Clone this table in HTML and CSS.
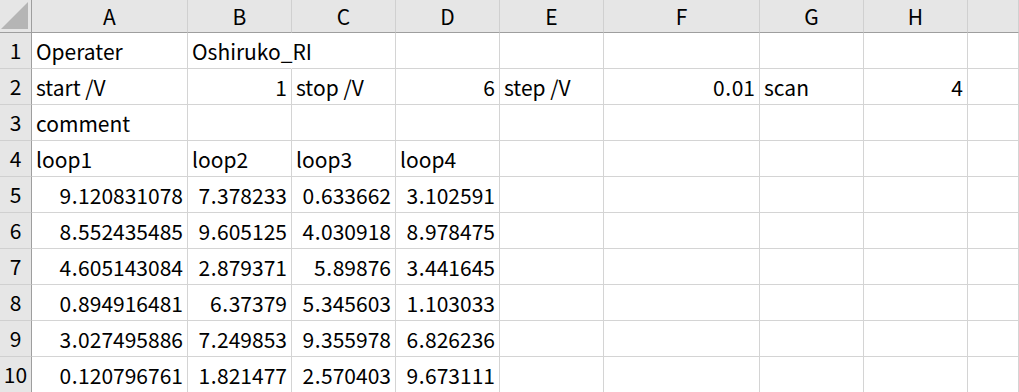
FILE: index.html
```html
<!DOCTYPE html>
<html>
<head>
<meta charset="utf-8">
<link rel="stylesheet" href="styles.css">
</head>
<body>
<div class="sheet">
  <div class="corner"><svg class="tri" width="27" height="27" viewBox="0 0 27 27"><polygon points="27,0 27,27 0,27" fill="#b5b5b5"/></svg></div>
  <div class="ch">A</div><div class="ch">B</div><div class="ch">C</div><div class="ch">D</div><div class="ch">E</div><div class="ch">F</div><div class="ch">G</div><div class="ch">H</div><div class="ch"></div>

  <div class="rh">1</div><div class="c">Operater</div><div class="c ov">Oshiruko_RI</div><div class="c"></div><div class="c"></div><div class="c"></div><div class="c"></div><div class="c"></div><div class="c"></div><div class="c"></div>

  <div class="rh">2</div><div class="c">start /V</div><div class="c n">1</div><div class="c">stop /V</div><div class="c n">6</div><div class="c">step /V</div><div class="c n">0<span class="dot">.</span>01</div><div class="c">scan</div><div class="c n">4</div><div class="c"></div>

  <div class="rh">3</div><div class="c">comment</div><div class="c"></div><div class="c"></div><div class="c"></div><div class="c"></div><div class="c"></div><div class="c"></div><div class="c"></div><div class="c"></div>

  <div class="rh">4</div><div class="c">loop1</div><div class="c">loop2</div><div class="c">loop3</div><div class="c">loop4</div><div class="c"></div><div class="c"></div><div class="c"></div><div class="c"></div><div class="c"></div>

  <div class="rh">5</div><div class="c n">9<span class="dot">.</span>120831078</div><div class="c n">7<span class="dot">.</span>378233</div><div class="c n">0<span class="dot">.</span>633662</div><div class="c n">3<span class="dot">.</span>102591</div><div class="c"></div><div class="c"></div><div class="c"></div><div class="c"></div><div class="c"></div>

  <div class="rh">6</div><div class="c n">8<span class="dot">.</span>552435485</div><div class="c n">9<span class="dot">.</span>605125</div><div class="c n">4<span class="dot">.</span>030918</div><div class="c n">8<span class="dot">.</span>978475</div><div class="c"></div><div class="c"></div><div class="c"></div><div class="c"></div><div class="c"></div>

  <div class="rh">7</div><div class="c n">4<span class="dot">.</span>605143084</div><div class="c n">2<span class="dot">.</span>879371</div><div class="c n">5<span class="dot">.</span>89876</div><div class="c n">3<span class="dot">.</span>441645</div><div class="c"></div><div class="c"></div><div class="c"></div><div class="c"></div><div class="c"></div>

  <div class="rh">8</div><div class="c n">0<span class="dot">.</span>894916481</div><div class="c n">6<span class="dot">.</span>37379</div><div class="c n">5<span class="dot">.</span>345603</div><div class="c n">1<span class="dot">.</span>103033</div><div class="c"></div><div class="c"></div><div class="c"></div><div class="c"></div><div class="c"></div>

  <div class="rh">9</div><div class="c n">3<span class="dot">.</span>027495886</div><div class="c n">7<span class="dot">.</span>249853</div><div class="c n">9<span class="dot">.</span>355978</div><div class="c n">6<span class="dot">.</span>826236</div><div class="c"></div><div class="c"></div><div class="c"></div><div class="c"></div><div class="c"></div>

  <div class="rh">10</div><div class="c n">0<span class="dot">.</span>120796761</div><div class="c n">1<span class="dot">.</span>821477</div><div class="c n">2<span class="dot">.</span>570403</div><div class="c n">9<span class="dot">.</span>673111</div><div class="c"></div><div class="c"></div><div class="c"></div><div class="c"></div><div class="c"></div>
</div>
</body>
</html>
```
FILE: styles.css
```css
html, body {
  margin: 0;
  padding: 0;
  background: #ffffff;
  overflow: hidden;
}
.sheet {
  display: grid;
  grid-template-columns: 32px 156px 104px 104px 104px 104px 156px 104px 104px 1fr;
  grid-template-rows: 33px repeat(10, 36px);
  width: 1019px;
  font-family: "Noto Sans CJK JP", "Noto Sans", sans-serif;
  font-size: 21px;
  color: #000;
}
.corner {
  background: #e6e6e6;
  border-right: 1px solid #9e9e9e;
  border-bottom: 1px solid #9e9e9e;
  display: flex;
  align-items: flex-end;
  justify-content: flex-end;
  padding: 0 3px 3px 0;
}
.tri { display: block; }
.ch {
  background: #e6e6e6;
  border-right: 1px solid #d0d0d0;
  border-bottom: 1px solid #9e9e9e;
  display: flex;
  align-items: center;
  justify-content: center;
  line-height: 1;
}
.rh {
  background: #e6e6e6;
  border-right: 1px solid #9e9e9e;
  border-bottom: 1px solid #d0d0d0;
  display: flex;
  align-items: center;
  justify-content: center;
  line-height: 1;
}
.c {
  border-right: 1px solid #d4d4d4;
  border-bottom: 1px solid #d4d4d4;
  display: flex;
  align-items: center;
  padding: 1px 4px 0 4px;
  white-space: nowrap;
  line-height: 1;
  min-width: 0;
}
.c.n {
  justify-content: flex-end;
  padding-right: 4px;
}
.dot {
  display: inline-block;
  width: 7px;
  text-align: center;
}
.c.ov {
  overflow: visible;
  border-right-color: transparent;
}
```
